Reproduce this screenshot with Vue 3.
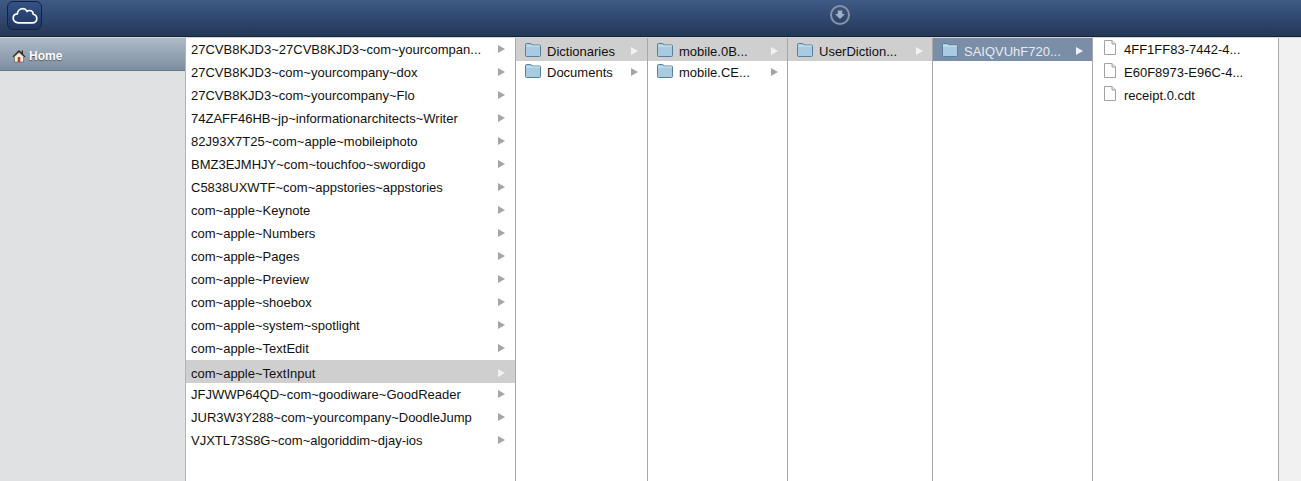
<script setup>
const cols = [
  { w: 330, rows: ['27CVB8KJD3~27CVB8KJD3~com~yourcompan...','27CVB8KJD3~com~yourcompany~dox','27CVB8KJD3~com~yourcompany~Flo','74ZAFF46HB~jp~informationarchitects~Writer','82J93X7T25~com~apple~mobileiphoto','BMZ3EJMHJY~com~touchfoo~swordigo','C5838UXWTF~com~appstories~appstories','com~apple~Keynote','com~apple~Numbers','com~apple~Pages','com~apple~Preview','com~apple~shoebox','com~apple~system~spotlight','com~apple~TextEdit','com~apple~TextInput','JFJWWP64QD~com~goodiware~GoodReader','JUR3W3Y288~com~yourcompany~DoodleJump','VJXTL73S8G~com~algoriddim~djay-ios'].map((t) => ({ t })), sel: 14, cls: 'apps' },
  { w: 132, rows: [{ t: 'Dictionaries', i: 'folder' }, { t: 'Documents', i: 'folder' }], sel: 0 },
  { w: 140, rows: [{ t: 'mobile.0B...', i: 'folder' }, { t: 'mobile.CE...', i: 'folder' }], sel: 0 },
  { w: 145, rows: [{ t: 'UserDiction...', i: 'folder' }], sel: 0 },
  { w: 160, rows: [{ t: 'SAIQVUhF720...', i: 'folder' }], sel: 0, active: true },
  { w: 186, rows: [{ t: '4FF1FF83-7442-4...', i: 'file' }, { t: 'E60F8973-E96C-4...', i: 'file' }, { t: 'receipt.0.cdt', i: 'file' }], sel: -1 },
]
</script>

<template>
  <div class="page">
    <header class="top">
      <button class="cloud" aria-label="iCloud">
        <svg width="26" height="17" viewBox="0 0 26 17"><path d="M6.5 15.8C3.2 15.8 1.2 13.8 1.2 11.2C1.2 8.9 2.9 7.1 5.2 6.9C5.7 4 8 1.7 10.8 1.7C12.7 1.7 14.2 2.7 15.1 4.2C15.8 3.7 16.6 3.5 17.4 3.5C19.6 3.5 21.2 5.2 21.3 7.3C23.3 7.8 24.8 9.3 24.8 11.4C24.8 13.9 23 15.8 20.4 15.8Z" fill="none" stroke="#fff" stroke-width="1.7"/></svg>
      </button>
      <svg class="down" width="20" height="20" viewBox="0 0 20 20"><circle cx="10" cy="10" r="9" fill="none" stroke="#8795ab" stroke-width="2"/><path d="M7.7 5.5H12.3V9H15L10 14L5 9H7.7Z" fill="#a3aebf"/></svg>
    </header>
    <div class="body">
      <aside class="side">
        <div class="home">
          <svg width="14" height="14" viewBox="0 0 14 14"><path d="M7 1L.5 7.5L1.4 8.2L7 2.9L12.6 8.2L13.5 7.5L11 5V1.5H9.8V3.8Z" fill="#2f241c"/><path d="M2.5 7.6L7 3.5L11.5 7.6V13H2.5Z" fill="#f3efe6" stroke="#5a5045" stroke-width=".6"/><rect x="5.7" y="8" width="2.6" height="5" fill="#b5401c"/></svg>
          <span>Home</span>
        </div>
      </aside>
      <section v-for="(c, ci) in cols" :key="ci" class="col" :class="c.cls" :style="{ width: c.w + 'px' }">
        <div v-for="(r, ri) in c.rows" :key="ri" class="row" :class="{ sel: ri === c.sel, active: ri === c.sel && c.active }">
          <svg v-if="r.i === 'folder'" class="ico" width="16" height="14" viewBox="0 0 16 14"><path d="M.5 3V1.5Q.5.5 1.5.5H5.5Q6.5 .5 7 2H14.5Q15.5 2 15.5 3V12.5Q15.5 13.5 14.5 13.5H1.5Q.5 13.5 .5 12.5Z" fill="#a9cbe2" stroke="#54819f"/><path d="M1 3H15" stroke="#d5e6f1"/></svg>
          <svg v-else-if="r.i === 'file'" class="ico file" width="12" height="15" viewBox="0 0 12 15"><path d="M.5.5H8L11.5 4V14.5H.5Z" fill="#fff" stroke="#a2a2a2"/><path d="M8 .5V4H11.5" fill="#e4e4e4" stroke="#a2a2a2"/></svg>
          <span class="label">{{ r.t }}</span>
          <i v-if="r.i !== 'file'" class="arrow"></i>
        </div>
      </section>
      <div class="rest"></div>
    </div>
  </div>
</template>

<style>
html, body { margin: 0; overflow: hidden; background: #fff; }
</style>

<style scoped>
.page { width: 1301px; height: 481px; display: flex; flex-direction: column; font: 13px "Liberation Sans", Arial, sans-serif; color: #111; overflow: hidden; }
.top { height: 38px; flex: none; box-sizing: border-box; position: relative; display: flex; align-items: center; justify-content: center; background: linear-gradient(#3f5a87, #233655); border-bottom: 1px solid #cfd3d8; box-shadow: inset 0 -1px 0 #182338; }
.cloud { position: absolute; left: 7px; top: 1px; width: 35px; height: 29px; padding: 0; display: flex; align-items: center; justify-content: center; background: linear-gradient(#355287, #1f3560); border: 1px solid #16223a; border-radius: 6px; }
.down { margin-left: 379px; margin-top: -7px; }
.body { flex: 1; display: flex; min-height: 0; }
.side { width: 186px; flex: none; box-sizing: border-box; background: #e0e1e3; border-right: 1px solid #b4b4b4; }
.home { height: 33px; display: flex; align-items: center; gap: 3px; padding: 4px 0 0 12px; box-sizing: border-box; color: #fff; font-size: 12px; font-weight: bold; text-shadow: 0 1px 1px #555; background: linear-gradient(#aebbc7, #7d8ea1); border-bottom: 1px solid #66788c; }
.col { flex: none; box-sizing: border-box; background: #fff; border-right: 1px solid #a8a8a8; }
.row { height: 23px; display: flex; align-items: flex-start; box-sizing: border-box; padding-top: 3px; padding-left: 9px; position: relative; line-height: 17px; white-space: nowrap; }
.apps .row { padding-left: 5px; }
.row.sel { background: #cfcfcf; padding-top: 5px; }
.row.active { background: #7a8ea8; color: #e6ebf1; }
.ico { flex: none; margin-right: 6px; }
.file { margin-right: 8px; margin-left: 2px; margin-top: -1px; }
.arrow { position: absolute; right: 9px; top: 7px; width: 0; height: 0; border-left: 7px solid #a6a6a6; border-top: 4px solid transparent; border-bottom: 4px solid transparent; }
.apps .arrow { right: 10px; }
.row.sel .arrow { border-left-color: #f2f2f2; top: 9px; }
.rest { flex: 1; background: #f1f1f1; }
</style>
